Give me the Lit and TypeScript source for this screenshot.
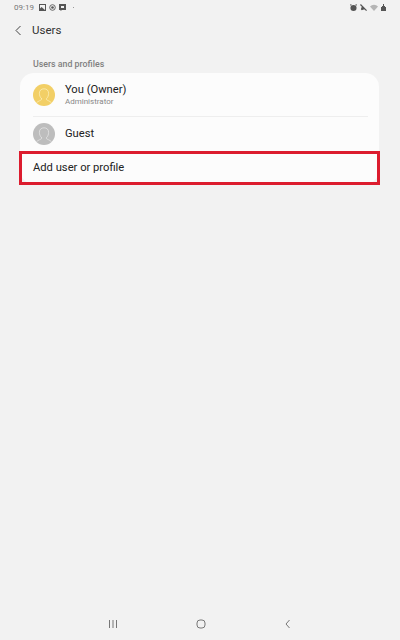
import { LitElement, html, css, svg } from 'lit';
import { customElement } from 'lit/decorators.js';

const avatar = (bg: string, line: string) => html`
  <svg class="avatar" viewBox="0 0 22 22">
    <circle cx="11" cy="11" r="11" fill="${bg}" />
    ${svg`<path d="M8.500 14.500C7 13.300 6.400 11.300 6.400 9.300 6.400 6.400 8.300 4.800 11 4.800s4.600 1.600 4.600 4.500c0 2-.6 4-2.100 5.200v1.100c.8.900 3 1.300 4.700 2.800M8.500 14.500v1.100c-.8.900-3 1.300-4.700 2.800" fill="none" stroke="${line}" stroke-width="0.8" stroke-linecap="round" />`}
  </svg>
`;

@customElement('app-root')
export class AppRoot extends LitElement {
  static styles = css`
    :host {
      display: flex;
      flex-direction: column;
      height: 640px;
      background: #f2f2f2;
      font-family: Roboto, "Liberation Sans", sans-serif;
      color: #222;
    }

    .status {
      display: flex;
      align-items: center;
      justify-content: space-between;
      height: 14px;
      padding: 0 14px;
      font-size: 8px;
      color: #777;
    }

    .status-left,
    .status-right {
      display: flex;
      align-items: center;
      gap: 3px;
    }

    .status-left span:first-child {
      margin-right: 2px;
    }

    .status svg {
      height: 7px;
      fill: #555;
    }

    .icon-7 {
      width: 7px;
    }

    .icon-wifi {
      width: 8px;
    }

    .icon-battery {
      width: 5px;
    }

    .status-dot {
      width: 1px;
      height: 1px;
      margin-left: 4px;
      background: #999;
    }

    .header {
      display: flex;
      align-items: center;
      gap: 9px;
      height: 32px;
      padding-left: 14px;
      font-size: 11.500px;
      color: #333;
    }

    .back {
      width: 9px;
      height: 11px;
      fill: none;
      stroke: #444;
      stroke-width: 1;
    }

    .section {
      height: 27px;
      padding: 13px 0 0 33px;
      box-sizing: border-box;
      font-size: 8.800px;
      font-weight: 500;
      line-height: 11px;
      color: #808080;
    }

    .card {
      display: flex;
      flex-direction: column;
      margin: 0 21px 0 20px;
      background: #fcfcfc;
      border-radius: 14px;
    }

    .row {
      display: flex;
      align-items: center;
      gap: 10px;
      padding: 0 13px;
    }

    .row-owner {
      height: 43px;
    }

    .row-guest {
      height: 34px;
    }

    .divider {
      height: 1px;
      margin: 0 11px 0 13px;
      background: #eeeeee;
    }

    .avatar {
      width: 22px;
      height: 22px;
      flex: none;
    }

    .name {
      font-size: 11.200px;
      line-height: 14px;
    }

    .sub {
      font-size: 8px;
      line-height: 10px;
      color: #888;
    }

    .row-add {
      position: relative;
      height: 33px;
      font-size: 11.200px;
    }

    .highlight {
      position: absolute;
      inset: 0 -1px -1px -1px;
      border: 3px solid #dc1c2e;
    }

    .spacer {
      flex: 1;
    }

    .nav {
      display: flex;
      align-items: center;
      justify-content: space-between;
      height: 28px;
      padding: 0 107px 2px 108px;
    }

    .nav svg {
      width: 10px;
      height: 10px;
      fill: none;
      stroke: #777;
      stroke-width: 1;
    }
  `;

  render() {
    return html`
      <div class="status">
        <div class="status-left">
          <span>09:19</span>
          <svg class="icon-7" viewBox="0 0 7 7"><path fill-rule="evenodd" d="M0 0h7v7H0zM1 1v3.500l1.500-1.500 3.500 3V1z" /></svg>
          <svg class="icon-7" viewBox="0 0 8 8"><circle cx="4" cy="4" r="3.200" fill="none" stroke="#555" /><circle cx="4" cy="4" r="1.500" /></svg>
          <svg class="icon-7" viewBox="0 0 7 7"><path fill-rule="evenodd" d="M0 0h7v6H3L1.500 7V6H0zM2 2v2h3V2z" /></svg>
          <span class="status-dot"></span>
        </div>
        <div class="status-right">
          <svg class="icon-7" viewBox="0 0 8 8"><circle cx="4" cy="4.500" r="3.500" /><path d="M0 1l1-1 1 1-1 1zM6 1l1-1 1 1-1 1z" /></svg>
          <svg class="icon-7" viewBox="0 0 8 8"><path d="M0 1l1-1 7 7-1 1zM1 6l1-3 3 3-3 1z" /></svg>
          <svg class="icon-wifi" viewBox="0 0 8 7" style="fill:#b5b5b5"><path d="M0 2.500a5.500 5.500 0 0 1 8 0L4 7z" /></svg>
          <svg class="icon-battery" viewBox="0 0 5 7"><path d="M2 0h1v2h1v1h1v4H0V3h1V2h1z" /></svg>
        </div>
      </div>

      <div class="header">
        <svg class="back" viewBox="0 0 9 11"><path d="M6.500 1L2 5.500 6.500 10" /></svg>
        <span>Users</span>
      </div>

      <div class="section">Users and profiles</div>

      <div class="card">
        <div class="row row-owner">
          ${avatar('#f2cf66', '#fbeeb8')}
          <div>
            <div class="name">You (Owner)</div>
            <div class="sub">Administrator</div>
          </div>
        </div>
        <div class="divider"></div>
        <div class="row row-guest">
          ${avatar('#bdbdbd', '#e4e4e4')}
          <div class="name">Guest</div>
        </div>
        <div class="row row-add">
          Add user or profile
          <div class="highlight"></div>
        </div>
      </div>

      <div class="spacer"></div>

      <div class="nav">
        <svg viewBox="0 0 10 10"><path d="M1.500 1v8M5 1v8M8.500 1v8" /></svg>
        <svg viewBox="0 0 10 10"><rect x="1" y="1" width="8" height="8" rx="3" /></svg>
        <svg viewBox="0 0 10 10"><path d="M6.500 1L3 5l3.500 4" /></svg>
      </div>
    `;
  }
}
